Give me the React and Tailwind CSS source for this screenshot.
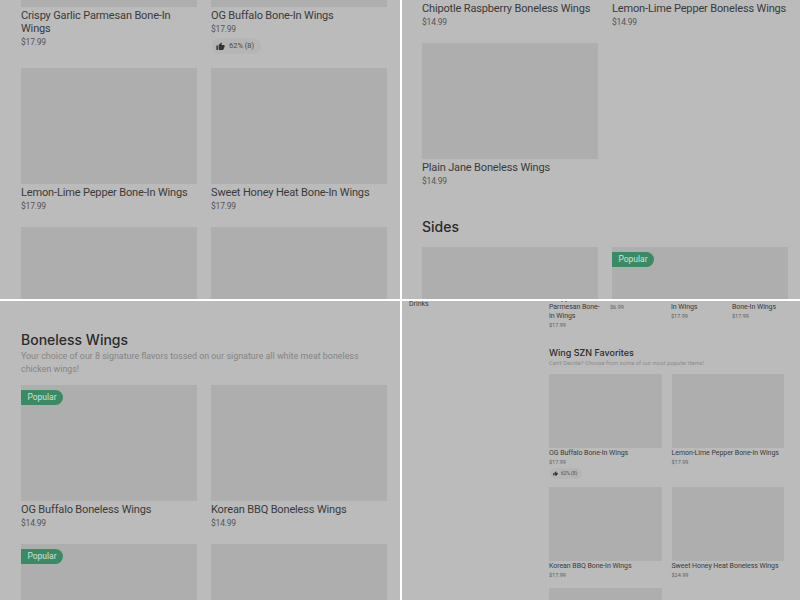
import { MdThumbUp } from "react-icons/md";

function Rating({ mini }) {
  if (mini) {
    return (
      <div className="mt-[1px] ml-[1px] flex h-[11px] w-[32px] items-center gap-[3px] rounded-full bg-[#b5b5b5] pl-[3px] text-[4.8px] whitespace-nowrap text-[#4a4a4a]">
        <MdThumbUp className="h-[5px] w-[5px] text-[#333333]" />
        <span>62% (8)</span>
      </div>
    );
  }
  return (
    <div className="mt-[2px] ml-[1px] flex h-[16px] w-[49px] items-center gap-[4px] rounded-full bg-[#b5b5b5] pl-[4px] text-[7.5px] whitespace-nowrap text-[#4a4a4a]">
      <MdThumbUp className="h-[9px] w-[9px] text-[#333333]" />
      <span>62% (8)</span>
    </div>
  );
}

function Card({ title, price, img = "h-[116px]", popular, rating }) {
  return (
    <div>
      {img && (
        <div className={`relative bg-[#aeaeae] ${img}`}>
          {popular && (
            <span className="absolute top-[5px] left-0 flex h-[15px] w-[42px] items-center justify-center rounded-r-full bg-[#3b8a66] text-[8.5px] text-[#cfe2d9]">
              Popular
            </span>
          )}
        </div>
      )}
      <p className="mt-[2px] text-[11px] leading-[13px] tracking-[-0.15px] text-[#3a3a3a]">{title}</p>
      <p className="mt-[1px] text-[8.5px] leading-[13px] tracking-[-0.2px] text-[#555555]">{price}</p>
      {rating && <Rating />}
    </div>
  );
}

function MiniCard({ title, price, img = "h-[74px]", rating }) {
  return (
    <div>
      {img && <div className={`bg-[#aeaeae] ${img}`} />}
      <p className="mt-[1px] text-[7px] leading-[9px] tracking-[-0.05px] text-[#3a3a3a]">{title}</p>
      <p className={`text-[5.5px] leading-[9px] text-[#5c5c5c] ${title ? "" : "mt-[1px]"}`}>{price}</p>
      {rating && <Rating mini />}
    </div>
  );
}

function Pane({ children, className = "" }) {
  return <div className={`overflow-hidden bg-[#bbbbbb] ${className}`}>{children}</div>;
}

export default function App() {
  return (
    <div
      className="grid h-[600px] w-[800px] grid-cols-[400px_398px] grid-rows-[299px_299px] gap-[2px] overflow-hidden bg-white"
      style={{ fontFamily: "Roboto, sans-serif" }}
    >
      <Pane className="pl-[21px]">
        <div className="grid w-[366px] grid-cols-2 items-start gap-x-[14px] gap-y-[14px]">
          <Card img="h-[7px]" title="Crispy Garlic Parmesan Bone-In Wings" price="$17.99" />
          <Card img="h-[7px]" title="OG Buffalo Bone-In Wings" price="$17.99" rating />
          <Card title="Lemon-Lime Pepper Bone-In Wings" price="$17.99" />
          <Card title="Sweet Honey Heat Bone-In Wings" price="$17.99" />
          <Card title="Chipotle Raspberry Bone-In Wings" price="$17.99" />
          <Card title="Korean BBQ Bone-In Wings" price="$17.99" />
        </div>
      </Pane>

      <Pane className="pl-[20px]">
        <div className="grid w-[366px] grid-cols-2 items-start gap-x-[14px] gap-y-[14px]">
          <Card img="" title="Chipotle Raspberry Boneless Wings" price="$14.99" />
          <Card img="" title="Lemon-Lime Pepper Boneless Wings" price="$14.99" />
          <Card title="Plain Jane Boneless Wings" price="$14.99" />
        </div>
        <h2 className="mt-[29px] font-['Inter'] text-[14px] leading-[20px] font-medium text-[#2b2b2b]">Sides</h2>
        <div className="mt-[10px] grid w-[366px] grid-cols-2 gap-x-[14px]">
          <Card title="Fries" price="$4.99" />
          <Card popular title="Ranch" price="$1.99" />
        </div>
      </Pane>

      <Pane className="pt-[29px] pl-[21px]">
        <h2 className="font-['Inter'] text-[14px] leading-[20px] font-medium text-[#2b2b2b]">Boneless Wings</h2>
        <p className="w-[345px] text-[8.9px] leading-[13px] text-[#858585]">
          Your choice of our 8 signature flavors tossed on our signature all white meat boneless chicken wings!
        </p>
        <div className="mt-[9px] grid w-[366px] grid-cols-2 gap-x-[14px] gap-y-[14px]">
          <Card popular title="OG Buffalo Boneless Wings" price="$14.99" />
          <Card title="Korean BBQ Boneless Wings" price="$14.99" />
          <Card popular title="Sweet Honey Heat Boneless Wings" price="$14.99" />
          <Card title="Crispy Garlic Parmesan Boneless Wings" price="$14.99" />
        </div>
      </Pane>

      <Pane className="flex">
        <div className="w-[147px] shrink-0 pl-[7px] text-[7px] leading-[7px] text-[#3a3a3a]">Drinks</div>
        <div className="w-[235px] pt-[1px]">
          <div className="grid grid-cols-4 items-start gap-x-[9px]">
            <div className="-mt-[9px]">
              <MiniCard img="" title="Crispy Garlic Parmesan Bone-In Wings" price="$17.99" />
            </div>
            <MiniCard img="" price="$6.99" />
            <MiniCard img="" title="In Wings" price="$17.99" />
            <MiniCard img="" title="Bone-In Wings" price="$17.99" />
          </div>
          <h2 className="mt-[16px] font-['Inter'] text-[9px] leading-[14px] font-medium text-[#2b2b2b]">Wing SZN Favorites</h2>
          <p className="text-[5.8px] leading-[7px] text-[#8c8c8c]">Can't Decide? Choose from some of our most popular items!</p>
          <div className="mt-[7px] grid grid-cols-2 items-start gap-x-[10px] gap-y-[8px]">
            <MiniCard title="OG Buffalo Bone-In Wings" price="$17.99" rating />
            <MiniCard title="Lemon-Lime Pepper Bone-In Wings" price="$17.99" />
            <MiniCard title="Korean BBQ Bone-In Wings" price="$17.99" />
            <MiniCard title="Sweet Honey Heat Boneless Wings" price="$24.99" />
            <MiniCard title="Plain Jane Bone-In Wings" price="$17.99" />
          </div>
        </div>
      </Pane>
    </div>
  );
}
